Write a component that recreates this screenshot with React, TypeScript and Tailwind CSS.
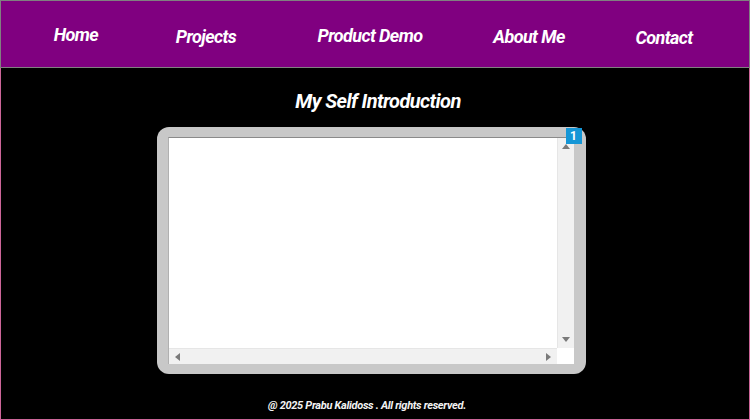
import React from "react";

const navItems = [
  { label: "Home", offset: "mt-0" },
  { label: "Projects", offset: "mt-[5px]" },
  { label: "Product Demo", offset: "mt-[2px]" },
  { label: "About Me", offset: "mt-[4px]" },
  { label: "Contact", offset: "mt-[6px]" },
];

const font = { fontFamily: "Roboto, 'Liberation Sans', sans-serif" };

function ScrollArrow({ dir }: { dir: "up" | "down" | "left" | "right" }) {
  const cls = {
    up: "border-x-[4px] border-x-transparent border-b-[5px] border-b-[#7a7a7a]",
    down: "border-x-[4px] border-x-transparent border-t-[5px] border-t-[#7a7a7a]",
    left: "border-y-[4px] border-y-transparent border-r-[5px] border-r-[#7a7a7a]",
    right: "border-y-[4px] border-y-transparent border-l-[5px] border-l-[#7a7a7a]",
  }[dir];
  return <div className={`h-0 w-0 ${cls}`} />;
}

export default function App() {
  return (
    <div className="w-[750px] h-[420px] bg-black flex flex-col" style={font}>
      {/* Nav bar */}
      <header className="h-[68px] bg-[#800080] border border-[#808080] grid grid-cols-[150px_110px_218px_100px_170px] items-center">
        {navItems.map((item) => (
          <a
            key={item.label}
            className={`text-center text-white text-[18px] font-bold italic tracking-[-0.6px] ${item.offset}`}
          >
            {item.label}
          </a>
        ))}
      </header>

      {/* Main */}
      <main className="flex-1 border-x border-b border-[#cc6699] flex flex-col items-center">
        <h1 className="mt-[20px] ml-[6px] text-white text-[20px] font-bold italic tracking-[-0.6px] leading-[26px]">
          My Self Introduction
        </h1>

        <div className="relative mt-[13px] ml-[-8px] w-[429px] h-[247px] rounded-[12px] bg-[#c8c8c8] pt-[10px] pl-[11px] pr-[12px] pb-[10px]">
          <div className="w-full h-full bg-white border-t border-t-[#8a8a8a] border-l border-l-[#b0b0b0] flex flex-col">
            <div className="flex-1 flex">
              <div className="flex-1" />
              <div className="w-[17px] bg-[#f1f1f1] border-l border-l-[#e6e6e6] flex flex-col items-center justify-between py-[6px]">
                <ScrollArrow dir="up" />
                <ScrollArrow dir="down" />
              </div>
            </div>
            <div className="h-[16px] flex">
              <div className="flex-1 bg-[#f1f1f1] border-t border-t-[#e6e6e6] flex items-center justify-between px-[6px]">
                <ScrollArrow dir="left" />
                <ScrollArrow dir="right" />
              </div>
              <div className="w-[17px] bg-white" />
            </div>
          </div>
          <span className="absolute top-[1px] right-[4px] w-[16px] h-[16px] bg-[#1596d6] text-white text-[12px] font-bold leading-[16px] text-center">
            1
          </span>
        </div>

        <footer className="mt-auto mb-[5px] ml-[-16px] text-[#f2f2f2] text-[11px] font-bold italic tracking-[-0.3px]">
          @ 2025 Prabu Kalidoss . All rights reserved.
        </footer>
      </main>
    </div>
  );
}
